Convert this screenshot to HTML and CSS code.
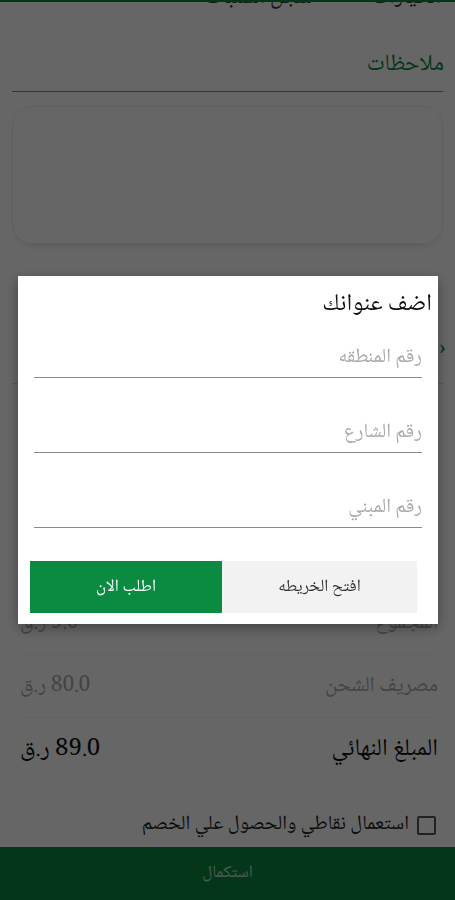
FILE: index.html
```html
<!DOCTYPE html>
<html lang="ar" dir="rtl">
<head>
    <meta charset="UTF-8">
    <meta name="viewport" content="width=device-width, initial-scale=1.0">
    <title>السلة</title>
    <link rel="stylesheet" href="styles.css">
</head>
<body>
    <div class="page">
        <div class="tabs">
            <span class="tab">الخيارات</span>
            <span class="tab">سجل السنبات</span>
        </div>

        <h2 class="section-title">ملاحظات</h2>
        <div class="notes"></div>

        <div class="address-row">
            <span class="arrow">‹</span>
        </div>

        <div class="summary">
            <div class="row muted">
                <span>المجموع</span>
                <span>9.0 ر.ق</span>
            </div>
            <div class="row muted">
                <span>مصريف الشحن</span>
                <span>80.0 ر.ق</span>
            </div>
            <div class="row total">
                <span>المبلغ النهائي</span>
                <span>89.0 ر.ق</span>
            </div>
        </div>

        <label class="points">
            <span class="box"></span>
            استعمال نقاطي والحصول علي الخصم
        </label>

        <div class="checkout">استكمال</div>
    </div>

    <div class="overlay"></div>

    <div class="dialog">
        <h3 class="dialog-title">اضف عنوانك</h3>
        <div class="field">رقم المنطقه</div>
        <div class="field">رقم الشارع</div>
        <div class="field">رقم المبني</div>
        <div class="actions">
            <button class="btn btn-map">افتح الخريطه</button>
            <button class="btn btn-order">اطلب الان</button>
        </div>
    </div>
</body>
</html>
```

FILE: styles.css
```css
body {
    font-family: "Noto Naskh Arabic", "Noto Sans Arabic", "DejaVu Sans", sans-serif;
    margin: 0;
    padding: 0;
    background: white;
    color: #222;
    width: 455px;
    height: 900px;
    overflow: hidden;
}
.page {
    height: 900px;
    display: flex;
    flex-direction: column;
}
.tabs {
    height: 14px;
    overflow: hidden;
    border-top: 2px solid #0b8b41;
    display: flex;
    gap: 60px;
    padding-right: 14px;
    font-size: 22px;
    color: #333;
}
.tab {
    margin-top: -20px;
    line-height: 32px;
}
.section-title {
    margin: 33px 11px 0 0;
    font-size: 23px;
    font-weight: normal;
    color: #0b8b41;
    line-height: 32px;
    height: 32px;
}
.notes {
    margin: 10px 12px 0;
    border-top: 1px solid #4caf50;
    padding-top: 14px;
    height: 140px;
}
.notes::before {
    content: "";
    display: block;
    height: 136px;
    border: 1px solid #eeeeee;
    border-radius: 20px;
    box-shadow: 0 6px 6px -4px rgba(0, 0, 0, 0.1);
}
.address-row {
    height: 138px;
    margin: 0 12px;
    border-bottom: 1px solid #ddd;
    display: flex;
    align-items: flex-end;
    padding-bottom: 14px;
    box-sizing: border-box;
}
.arrow {
    font-size: 22px;
    margin-right: -3px;
    color: #0b8b41;
}
.summary {
    margin: 208px 17px 0 20px;
}
.row {
    display: flex;
    justify-content: space-between;
    align-items: center;
    height: 62px;
    font-size: 21px;
}
.row.muted {
    color: #aaa;
    border-bottom: 1px solid #f4f4f4;
}
.row.total {
    color: #111;
    font-size: 24px;
}
.points {
    display: flex;
    align-items: center;
    gap: 8px;
    margin: 28px 19px 0 0;
    font-size: 20px;
    color: #222;
}
.box {
    width: 15px;
    height: 15px;
    border: 2px solid #555;
    border-radius: 2px;
}
.checkout {
    margin-top: auto;
    height: 53px;
    background: #0b8b41;
    color: rgba(255, 255, 255, 0.75);
    font-size: 17px;
    display: flex;
    align-items: center;
    justify-content: center;
}
.overlay {
    position: fixed;
    inset: 0;
    background: rgba(0, 0, 0, 0.6);
}
.dialog {
    position: fixed;
    top: 276px;
    left: 18px;
    width: 420px;
    background: white;
    box-shadow: 0 4px 12px rgba(0, 0, 0, 0.35);
    padding: 13px 16px 11px 12px;
    box-sizing: border-box;
}
.dialog-title {
    margin: 0 -10px 0 0;
    font-size: 24px;
    font-weight: normal;
    line-height: 32px;
    color: #111;
}
.field {
    margin: 18px 0 0 4px;
    height: 38px;
    border-bottom: 1.5px solid #8a8a8a;
    color: #aaa;
    font-size: 20px;
    line-height: 38px;
}
.field + .field {
    margin-top: 36px;
}
.actions {
    display: flex;
    margin: 33px 5px 0 0;
}
.btn {
    height: 52px;
    border: none;
    font-family: inherit;
    font-size: 17px;
    cursor: pointer;
}
.btn-map {
    width: 195px;
    background: #f2f2f2;
    color: #333;
}
.btn-order {
    width: 192px;
    background: #0b8b41;
    color: white;
}
```
